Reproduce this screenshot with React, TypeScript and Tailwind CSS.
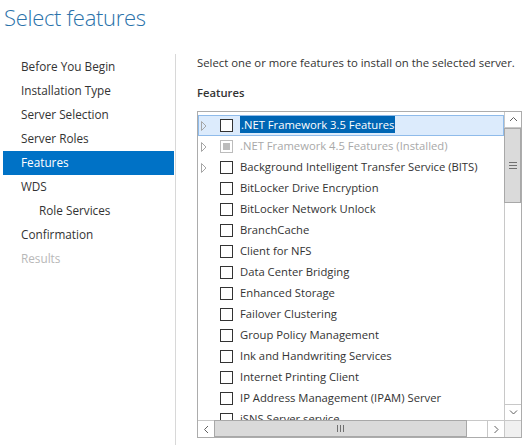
import React from "react";

const navItems: { label: string; indent?: boolean; selected?: boolean; disabled?: boolean }[] = [
  { label: "Before You Begin" },
  { label: "Installation Type" },
  { label: "Server Selection" },
  { label: "Server Roles" },
  { label: "Features", selected: true },
  { label: "WDS" },
  { label: "Role Services", indent: true },
  { label: "Confirmation" },
  { label: "Results", disabled: true },
];

const features: { label: string; expander?: boolean; selected?: boolean; installed?: boolean }[] = [
  { label: ".NET Framework 3.5 Features", expander: true, selected: true },
  { label: ".NET Framework 4.5 Features (Installed)", expander: true, installed: true },
  { label: "Background Intelligent Transfer Service (BITS)", expander: true },
  { label: "BitLocker Drive Encryption" },
  { label: "BitLocker Network Unlock" },
  { label: "BranchCache" },
  { label: "Client for NFS" },
  { label: "Data Center Bridging" },
  { label: "Enhanced Storage" },
  { label: "Failover Clustering" },
  { label: "Group Policy Management" },
  { label: "Ink and Handwriting Services" },
  { label: "Internet Printing Client" },
  { label: "IP Address Management (IPAM) Server" },
  { label: "iSNS Server service" },
];

function Chevron({ dir }: { dir: "up" | "down" | "left" | "right" }) {
  const pts: Record<string, string> = {
    up: "1,5 4.5,1.5 8,5",
    down: "1,1.5 4.5,5 8,1.5",
    left: "5,1 1.5,4.5 5,8",
    right: "1.5,1 5,4.5 1.5,8",
  };
  const vertical = dir === "up" || dir === "down";
  return (
    <svg width={vertical ? 9 : 7} height={vertical ? 7 : 9} viewBox={vertical ? "0 0 9 7" : "0 0 7 9"}>
      <polyline points={pts[dir]} fill="none" stroke="#606060" strokeWidth="1" />
    </svg>
  );
}

export default function App() {
  return (
    <div
      className="w-[526px] h-[445px] bg-white overflow-hidden flex flex-col text-[#333333]"
      style={{ fontFamily: '"Open Sans", "Noto Sans", sans-serif' }}
    >
      <div className="h-[54px] pl-[4px] pt-[1px] text-[22px] leading-[32px] font-light tracking-[-0.3px] text-[#2a72aa]">
        Select features
      </div>
      <div className="flex flex-1 min-h-0">
        <div className="w-[176px] shrink-0 border-r border-[#d8d8d8] pl-[3px] pr-[1px] pt-[1px]">
          {navItems.map((n) => (
            <div
              key={n.label}
              className={
                "h-[24px] flex items-center text-[11.75px] " +
                (n.indent ? "pl-[36px] " : "pl-[18px] ") +
                (n.selected ? "bg-[#0072c6] text-white " : "") +
                (n.disabled ? "text-[#b8b8b8] " : "")
              }
            >
              {n.label}
            </div>
          ))}
        </div>
        <div className="flex-1 min-w-0 pl-[21px] pt-[1px] flex flex-col">
          <div className="h-[16px] text-[11.35px] leading-[16px] flex items-center whitespace-nowrap">
            Select one or more features to install on the selected server.
          </div>
          <div className="h-[16px] mt-[14px] text-[11.25px] font-semibold leading-[16px] flex items-center">
            Features
          </div>
          <div className="mt-[10px] w-[325px] h-[327px] border border-[#acacac] grid grid-cols-[1fr_17px] grid-rows-[1fr_17px]">
            <div className="overflow-hidden pt-[3px]">
              {features.map((f) => (
                <div
                  key={f.label}
                  className={
                    "h-[21px] flex items-center border " +
                    (f.selected ? "bg-[#dcebfc] border-[#8fbbea]" : "border-transparent")
                  }
                >
                  <div className="w-[21px] flex justify-start pl-[2px]">
                    {f.expander && (
                      <svg width="6" height="10" viewBox="0 0 6 10">
                        <polygon points="0.5,0.5 5,5 0.5,9.5" fill="none" stroke="#a6a6a6" strokeWidth="1" />
                      </svg>
                    )}
                  </div>
                  <div
                    className={
                      "w-[13px] h-[13px] border bg-white flex items-center justify-center " +
                      (f.installed ? "border-[#bcbcbc]" : "border-[#333333]")
                    }
                  >
                    {f.installed && <div className="w-[7px] h-[7px] bg-[#bcbcbc]" />}
                  </div>
                  <div className="ml-[7px] whitespace-nowrap text-[11.25px]">
                    <span
                      className={
                        f.selected
                          ? "bg-[#0066b4] text-white px-[1px] py-[1px]"
                          : f.installed
                          ? "text-[#a8a8a8]"
                          : ""
                      }
                    >
                      {f.label}
                    </span>
                  </div>
                </div>
              ))}
            </div>
            <div className="border-l border-[#c8c8c8] flex flex-col">
              <div className="h-[16px] flex items-center justify-center border-b border-[#c8c8c8]">
                <Chevron dir="up" />
              </div>
              <div className="h-[75px] bg-[#dadada] border border-[#a8a8a8] -ml-[1px] flex flex-col items-center justify-center gap-[2px]">
                <div className="w-[8px] h-[1px] bg-[#707070]" />
                <div className="w-[8px] h-[1px] bg-[#707070]" />
                <div className="w-[8px] h-[1px] bg-[#707070]" />
              </div>
              <div className="flex-1" />
              <div className="h-[16px] flex items-center justify-center border-t border-[#c8c8c8]">
                <Chevron dir="down" />
              </div>
            </div>
            <div className="border-t border-[#c8c8c8] flex">
              <div className="w-[17px] flex items-center justify-center border-r border-[#c8c8c8]">
                <Chevron dir="left" />
              </div>
              <div className="w-[253px] bg-[#dadada] border border-[#a8a8a8] -mt-[1px] -ml-[1px] flex items-center justify-center gap-[2px]">
                <div className="w-[1px] h-[7px] bg-[#707070]" />
                <div className="w-[1px] h-[7px] bg-[#707070]" />
                <div className="w-[1px] h-[7px] bg-[#707070]" />
              </div>
              <div className="flex-1" />
              <div className="w-[17px] flex items-center justify-center border-l border-[#c8c8c8]">
                <Chevron dir="right" />
              </div>
            </div>
            <div className="bg-[#f0f0f0] border-t border-l border-[#c8c8c8]" />
          </div>
        </div>
      </div>
    </div>
  );
}
